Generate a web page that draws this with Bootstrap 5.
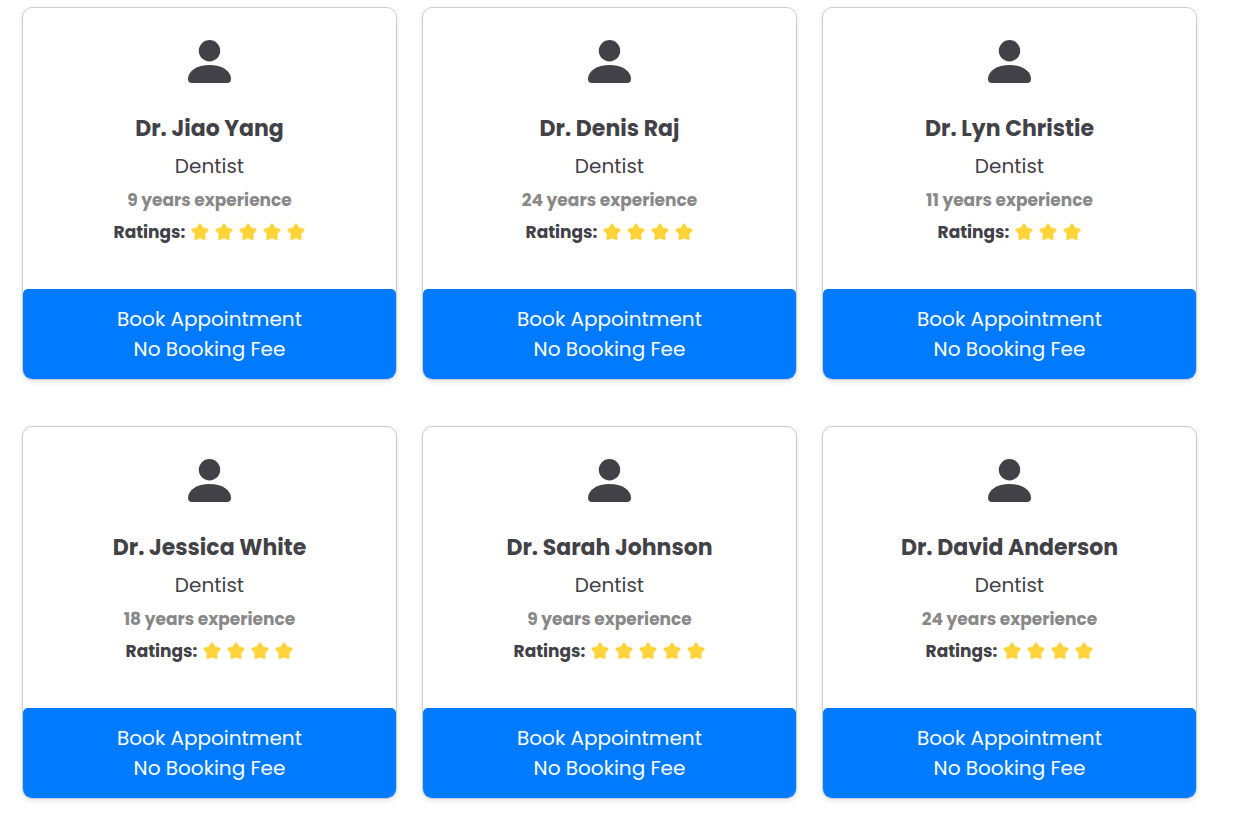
<!DOCTYPE html>
<html lang="en">
<head>
<meta charset="utf-8">
<meta name="viewport" content="width=device-width, initial-scale=1">
<title>Find a dentist</title>
<link href="https://cdn.jsdelivr.net/npm/bootstrap@5.3.0/dist/css/bootstrap.min.css" rel="stylesheet">
<style>
body { font-family: Poppins, Inter, "Open Sans", sans-serif; color: #424147; background: #fff; }
.doctor-list { grid-template-columns: repeat(3, minmax(0, 1fr)); gap: 46px 25px; padding: 7px 58px 22px 22px; }
.doctor-card { border: 1px solid #ccc; border-radius: 10px; box-shadow: 0 2px 5px rgba(0, 0, 0, .1); overflow: hidden; }
.doctor-info { padding: 32px 16px 43px; }
.doctor-avatar { width: 43px; height: 43px; margin-bottom: 29px; }
.doctor-name { font-size: 22px; line-height: 34px; font-weight: 700; margin-bottom: 5px; }
.doctor-role { font-size: 20px; line-height: 30px; font-weight: 400; margin-bottom: 5px; }
.doctor-years { font-size: 17px; line-height: 28px; font-weight: 700; color: #888; margin-bottom: 4px; }
.doctor-rating { font-size: 17px; line-height: 28px; font-weight: 700; }
.rating-label { margin-right: 6px; }
.stars { gap: 6px; }
.stars svg { width: 18px; height: 18px; }
.book-btn { --bs-btn-bg: #007bff; --bs-btn-border-color: #007bff; --bs-btn-hover-bg: #0069d9; --bs-btn-color: #fff; border: 0; border-radius: 5px 5px 0 0; padding: 15px; font-size: 20px; line-height: 30px; }
@media (max-width: 767px) { .doctor-list { grid-template-columns: minmax(0, 1fr); padding-right: 22px; } }
</style>
</head>
<body>
<svg class="d-none" aria-hidden="true">
  <symbol id="person" viewBox="0 0 43 43"><circle cx="21.5" cy="10.8" r="10.7"/><path d="M0 39C0 31 9 25 21.5 25S43 31 43 39C43 41.500 41.500 43 39 43H4C1.500 43 0 41.500 0 39Z"/></symbol>
  <symbol id="star" viewBox="0 0 18 18"><path d="M9 2.200 11.100 6 15.900 7 12.600 10.700 13.100 15.400 9 13.600 4.900 15.400 5.400 10.700 2.100 7 6.900 6Z" fill="#ffd43b" stroke="#ffd43b" stroke-width="3.200" stroke-linejoin="round"/></symbol>
</svg>
<main class="doctor-list d-grid" id="doctors"></main>
<template id="doctor">
  <article class="doctor-card d-flex flex-column text-center">
    <div class="doctor-info flex-grow-1">
      <svg class="doctor-avatar d-block mx-auto" fill="#424147" aria-hidden="true"><use href="#person"/></svg>
      <h2 class="doctor-name"></h2>
      <p class="doctor-role">Dentist</p>
      <p class="doctor-years"></p>
      <div class="doctor-rating d-flex justify-content-center align-items-center"><span class="rating-label">Ratings:</span><span class="stars d-flex"></span></div>
    </div>
    <button type="button" class="btn book-btn w-100">Book Appointment<br>No Booking Fee</button>
  </article>
</template>
<script src="https://cdn.jsdelivr.net/npm/bootstrap@5.3.0/dist/js/bootstrap.bundle.min.js"></script>
<script>
const doctors = [
  ["Dr. Jiao Yang", 9, 5], ["Dr. Denis Raj", 24, 4], ["Dr. Lyn Christie", 11, 3],
  ["Dr. Jessica White", 18, 4], ["Dr. Sarah Johnson", 9, 5], ["Dr. David Anderson", 24, 4]
];
const template = document.getElementById("doctor");
for (const [name, years, rating] of doctors) {
  const card = template.content.cloneNode(true);
  card.querySelector(".doctor-name").textContent = name;
  card.querySelector(".doctor-years").textContent = years + " years experience";
  card.querySelector(".stars").innerHTML = '<svg aria-hidden="true"><use href="#star"/></svg>'.repeat(rating);
  document.getElementById("doctors").append(card);
}
</script>
</body>
</html>
